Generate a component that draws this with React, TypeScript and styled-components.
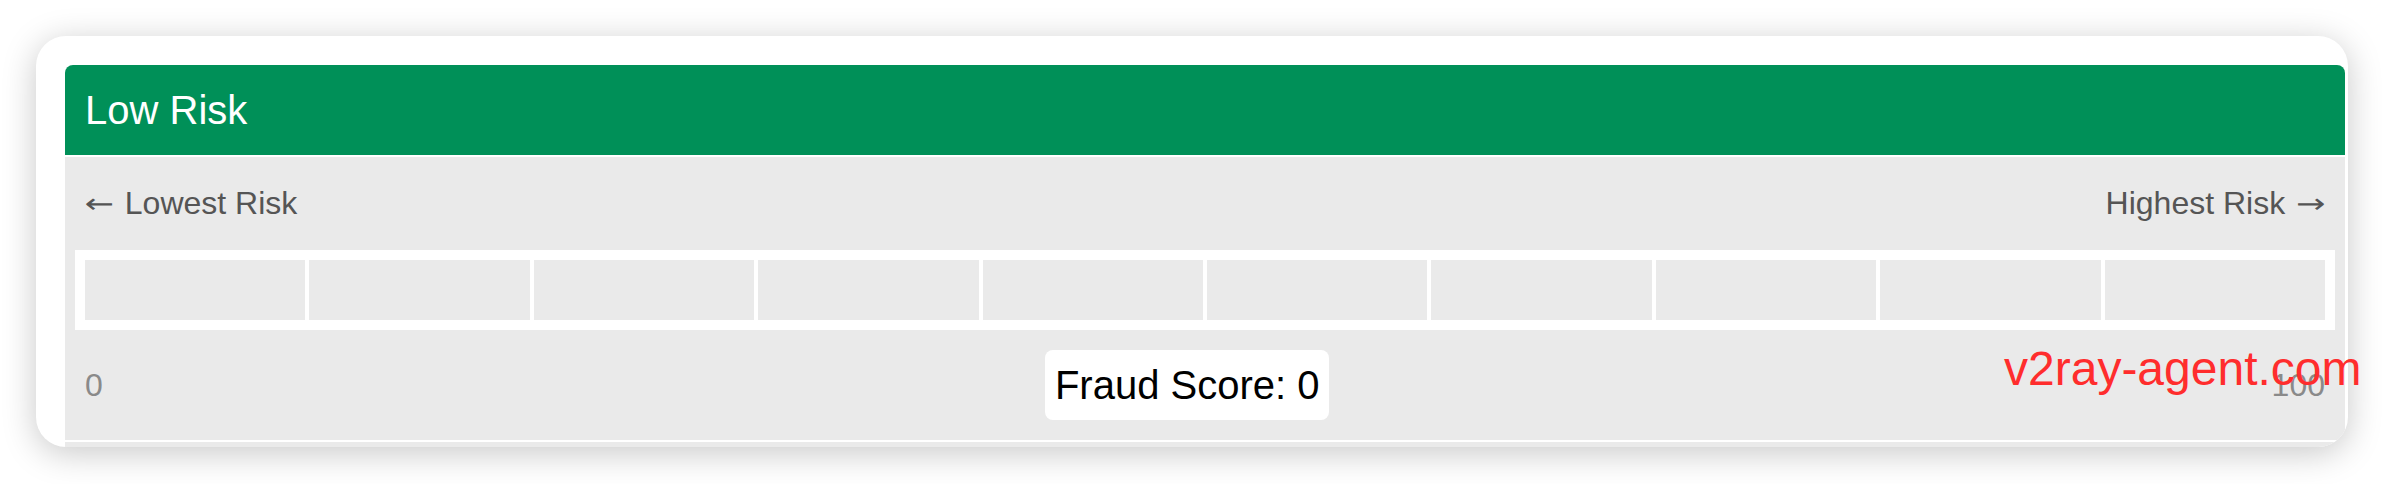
import * as React from "react";
import styled, { createGlobalStyle } from "styled-components";

const GREEN = "#009058";
const PANEL_GRAY = "#eaeaea";
const FONT = `"Liberation Sans", Arial, Helvetica, sans-serif`;

const GlobalStyle = createGlobalStyle`
  html, body {
    margin: 0;
    padding: 0;
    background: #ffffff;
    font-family: ${FONT};
  }
`;

const SEGMENTS = 10;

const App: React.FC = () => {
  const score = 0;
  return (
    <>
      <GlobalStyle />
      <Page>
        <Card>
          <RiskPanel>
            <RiskHeader>Low Risk</RiskHeader>
            <RiskBody>
              <LabelRow>
                <Label>
                  <Arrow $side="left">←</Arrow>Lowest Risk
                </Label>
                <Label>
                  Highest Risk<Arrow $side="right">→</Arrow>
                </Label>
              </LabelRow>
              <Meter>
                {Array.from({ length: SEGMENTS }).map((_, i) => (
                  <Segment key={i} />
                ))}
              </Meter>
              <ScoreRow>
                <Bound>0</Bound>
                <ScoreBadge>Fraud Score: {score}</ScoreBadge>
                <Bound>100</Bound>
              </ScoreRow>
            </RiskBody>
          </RiskPanel>
          <NextPanel />
        </Card>
        <Watermark>v2ray-agent.com</Watermark>
      </Page>
    </>
  );
};

export default App;

const Page = styled.div`
  position: relative;
  width: 2384px;
  height: 484px;
  padding: 36px 0 0 36px;
  box-sizing: border-box;
  overflow: hidden;
`;
const Card = styled.div`
  display: flex;
  flex-direction: column;
  gap: 2px;
  width: 2312px;
  height: 411px;
  box-sizing: border-box;
  padding: 29px 3px 0 29px;
  background: #ffffff;
  border-radius: 30px;
  box-shadow: 0 6px 34px rgba(0, 0, 0, 0.22);
  overflow: hidden;
`;
const RiskPanel = styled.div`
  display: flex;
  flex-direction: column;
  gap: 2px;
`;
const RiskHeader = styled.div`
  display: flex;
  align-items: center;
  height: 90px;
  padding: 0 20px;
  background: ${GREEN};
  color: #ffffff;
  font-size: 40px;
  border-radius: 8px 8px 0 0;
`;
const RiskBody = styled.div`
  display: flex;
  flex-direction: column;
  padding: 0 10px;
  background: ${PANEL_GRAY};
`;
const LabelRow = styled.div`
  display: flex;
  justify-content: space-between;
  align-items: center;
  height: 93px;
  padding: 0 10px;
`;
const Label = styled.span`
  display: inline-flex;
  align-items: center;
  font-size: 32px;
  color: #555555;
  white-space: nowrap;
`;
// long, thin arrows beside the scale labels
const Arrow = styled.span<{ $side: "left" | "right" }>`
  display: inline-block;
  font-family: "DejaVu Sans", sans-serif;
  font-size: 32px;
  transform: scaleX(1.1) scaleY(0.85);
  margin: ${(p) => (p.$side === "left" ? "0 12px 0 1px" : "0 1px 0 12px")};
`;
const Meter = styled.div`
  display: flex;
  gap: 4px;
  height: 80px;
  padding: 10px;
  box-sizing: border-box;
  background: #ffffff;
`;
const Segment = styled.div`
  flex: 1;
  background: ${PANEL_GRAY};
`;
const ScoreRow = styled.div`
  display: flex;
  justify-content: space-between;
  align-items: center;
  padding: 20px 10px;
`;
const Bound = styled.span`
  font-size: 32px;
  color: #8a8a8a;
`;
const ScoreBadge = styled.div`
  display: flex;
  align-items: center;
  height: 70px;
  padding: 0 10px;
  background: #ffffff;
  border-radius: 8px;
  color: #000000;
  font-size: 40px;
`;
const NextPanel = styled.div`
  flex: 1;
  background: ${PANEL_GRAY};
`;
const Watermark = styled.div`
  position: absolute;
  left: 2004px;
  top: 345px;
  font-size: 48px;
  line-height: 1;
  color: #ff2d2d;
  white-space: nowrap;
  pointer-events: none;
`;
